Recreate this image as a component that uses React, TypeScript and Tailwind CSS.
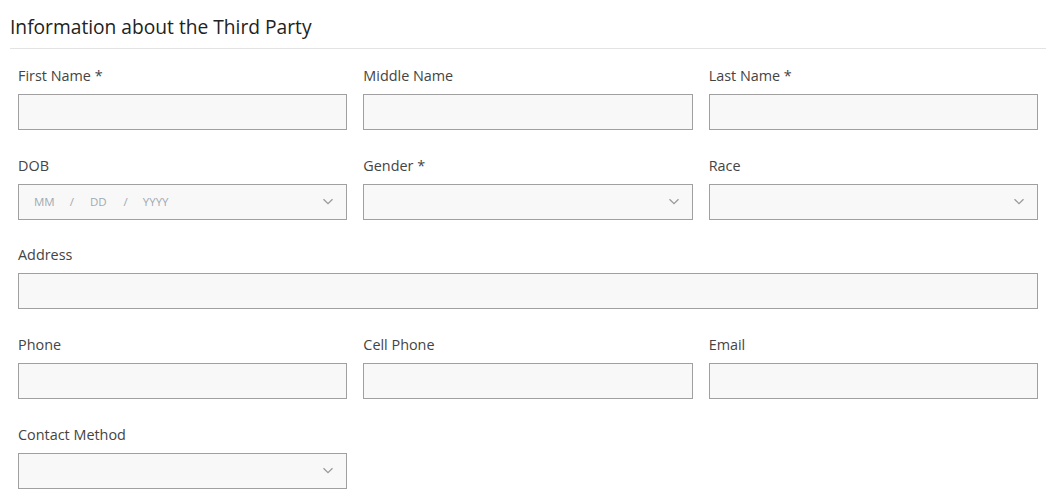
import React from "react";

const Chevron = () => (
  <svg width="12" height="7" viewBox="0 0 12 7" className="shrink-0">
    <path d="M1.5 1.2l4.5 4.5 4.5-4.5" fill="none" stroke="#9a9a9a" strokeWidth="1.3" />
  </svg>
);

function Field({ label, type = "text", span = "" }: { label: string; type?: "text" | "select" | "date"; span?: string }) {
  return (
    <div className={`flex flex-col ${span}`}>
      <label className="text-[14.4px] leading-5 text-[#444] pt-px mb-[8px]">{label}</label>
      {type === "text" && (
        <input className="h-9 w-full border border-[#a0a0a0] bg-[#f8f8f8] px-3 text-[15px] outline-none" />
      )}
      {type === "select" && (
        <div className="h-9 w-full border border-[#a0a0a0] bg-[#f8f8f8] flex items-center justify-end pr-[12px]">
          <Chevron />
        </div>
      )}
      {type === "date" && (
        <div className="h-9 w-full border border-[#a0a0a0] bg-[#f8f8f8] flex items-center pl-[15px] pr-[12px] text-[11.5px] text-[#9fa9b3]">
          <span>MM</span>
          <span className="ml-[15px]">/</span>
          <span className="ml-[16px]">DD</span>
          <span className="ml-[17px]">/</span>
          <span className="ml-[15px]">YYYY</span>
          <span className="flex-1" />
          <Chevron />
        </div>
      )}
    </div>
  );
}

export default function App() {
  return (
    <div className="bg-white w-[1058px] h-[504px] pt-[14px] px-[10px]" style={{ fontFamily: '"Source Sans Pro", "Open Sans", sans-serif' }}>
      <h2 className="text-[19.2px] leading-[26px] text-[#222] pb-[8px] border-b border-[#e3e3e3] mr-[2px]">
        Information about the Third Party
      </h2>
      <div className="grid grid-cols-3 gap-x-4 gap-y-[24.7px] pl-[8px] pr-[10px] pt-[16px]">
        <Field label="First Name *" />
        <Field label="Middle Name" />
        <Field label="Last Name *" />
        <Field label="DOB" type="date" />
        <Field label="Gender *" type="select" />
        <Field label="Race" type="select" />
        <Field label="Address" span="col-span-3" />
        <Field label="Phone" />
        <Field label="Cell Phone" />
        <Field label="Email" />
        <Field label="Contact Method" type="select" />
      </div>
    </div>
  );
}
